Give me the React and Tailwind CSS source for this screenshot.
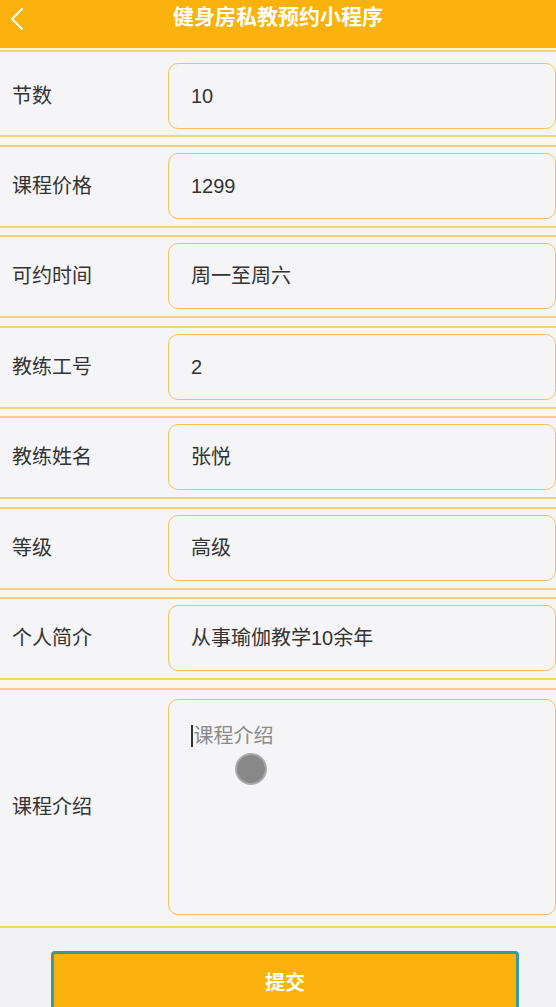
import React from 'react';

const fields = [
  { label: '节数', value: '10' },
  { label: '课程价格', value: '1299' },
  { label: '可约时间', value: '周一至周六' },
  { label: '教练工号', value: '2' },
  { label: '教练姓名', value: '张悦' },
  { label: '等级', value: '高级' },
  { label: '个人简介', value: '从事瑜伽教学10余年' },
];

const font = { fontFamily: '"Liberation Sans", "Noto Sans CJK SC", sans-serif' };

const App = () => {
  return (
    <div className="relative h-[1007px] w-[556px] overflow-hidden bg-[#f2f1f4]" style={font}>
      <header className="relative flex h-[48px] items-start justify-center bg-[#f9b10b]">
        <svg className="absolute left-[9px] top-[7px] h-[24px] w-[16px]" viewBox="0 0 16 24" fill="none">
          <path d="M13 2 L3 12 L13 22" stroke="#fff" strokeWidth="2" strokeLinecap="round" strokeLinejoin="round" />
        </svg>
        <h1 className="mt-[3px] text-[21px] font-bold leading-[28px] text-white">健身房私教预约小程序</h1>
      </header>

      <div className="bg-[#fbf6ec] pt-[2px]">
        {fields.map((f, i) => (
          <div
            key={f.label}
            className={`flex items-center border-y-2 border-[#f6d17c] bg-[#f5f5f7] ${
              i === 0 ? 'pt-[11px] pb-[6px]' : 'mt-[7.5px] pt-[6px] pb-[7px]'
            }`}
          >
            <div className="w-[168px] pl-[12px] text-[20px] text-[#333]">{f.label}</div>
            <div className="flex h-[66px] flex-1 items-center rounded-[10px] border-[1.5px] border-[#f4c45c] pl-[22px] text-[20px] text-[#333]">
              {f.value}
            </div>
          </div>
        ))}

        <div className="mt-[7.5px] flex items-center border-y-2 border-[#f6d17c] bg-[#f5f5f7] pt-[9px] pb-[11px]">
          <div className="w-[168px] pl-[12px] text-[20px] text-[#333]">课程介绍</div>
          <div className="relative h-[216px] flex-1 rounded-[10px] border-[1.5px] border-[#f4c45c] pl-[22px] pt-[22px]">
            <div className="flex items-center text-[20px] leading-[28px] text-[#8a8a8a]">
              <span className="mr-[1px] h-[22px] w-[1.5px] bg-[#333]" />
              课程介绍
            </div>
            <div className="absolute left-[66px] top-[53px] h-[32px] w-[32px] rounded-full border-2 border-[#aaa] bg-[#888]" />
          </div>
        </div>
      </div>

      <div className="pt-[23px]">
        <button className="ml-[51px] flex h-[64px] w-[468px] items-start justify-center rounded-[4px] border-[3px] border-[#3a9a9a] bg-[#f9b10b] pt-[14px] text-[20px] font-bold text-white">
          提交
        </button>
      </div>
    </div>
  );
};

export default App;
